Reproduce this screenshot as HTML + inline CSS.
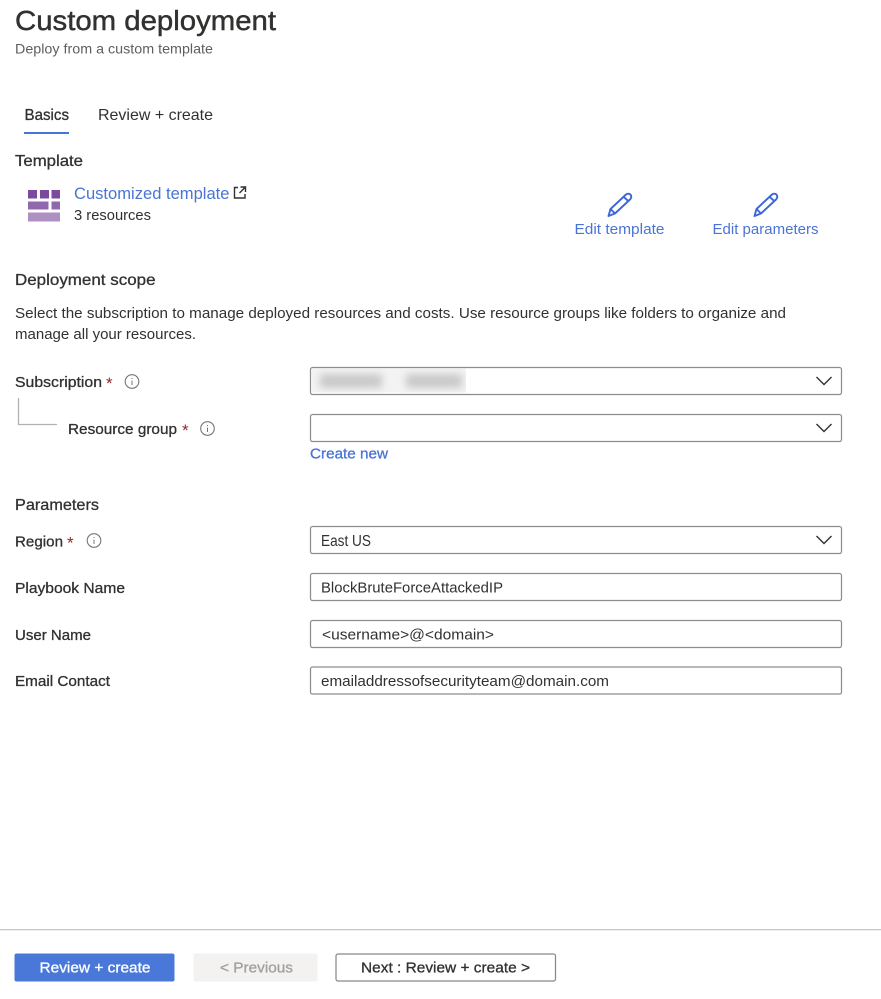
<!DOCTYPE html>
<html lang="en">
<head>
<meta charset="utf-8">
<title>Custom deployment</title>
<style>
html,body{margin:0;padding:0;background:#fff;width:881px;height:999px;overflow:hidden}
svg{display:block}
text{font-family:"Liberation Sans",sans-serif;fill:#323130;font-size:15px}
.sb{stroke:#323130;stroke-width:.3px}
.lnk{fill:#4a74d4}
.box{fill:#fff;stroke:#8f8d8b;stroke-width:1.25}
.chev{fill:none;stroke:#323130;stroke-width:1.4}
.info circle{fill:none;stroke:#797775;stroke-width:1.1}
.info rect{fill:#797775}
.pen{fill:none;stroke:#3d66d6;stroke-width:1.9;stroke-linejoin:round}
.star{fill:#8f2a30}
</style>
</head>
<body>
<svg width="881" height="999" viewBox="0 0 881 999" xmlns="http://www.w3.org/2000/svg">
<defs><filter id="b" x="-30%" y="-60%" width="160%" height="220%"><feGaussianBlur stdDeviation="4"/></filter>
<clipPath id="c"><rect x="312" y="368" width="154" height="25"/></clipPath></defs>

<text x="15" y="30" textLength="261" lengthAdjust="spacingAndGlyphs" style="font-size:28px;stroke:#323130;stroke-width:.45px">Custom deployment</text>
<text x="15" y="53.500" textLength="198" lengthAdjust="spacingAndGlyphs" style="font-size:14px;fill:#605e5c">Deploy from a custom template</text>

<text x="24.500" y="120" textLength="44.500" lengthAdjust="spacingAndGlyphs" class="sb" style="font-size:16px">Basics</text>
<text x="98" y="120" textLength="115" lengthAdjust="spacingAndGlyphs" style="font-size:16px">Review + create</text>
<rect x="24" y="132" width="45" height="2" fill="#4576d6"/>

<text x="15" y="166" textLength="68" lengthAdjust="spacingAndGlyphs" class="sb" style="font-size:16px">Template</text>

<g>
<rect x="28" y="190" width="9" height="8.500" fill="#7b4a9e"/>
<rect x="40" y="190" width="9" height="8.500" fill="#7b4a9e"/>
<rect x="51.500" y="190" width="8.500" height="8.500" fill="#7b4a9e"/>
<rect x="28" y="201.500" width="20.500" height="8" fill="#9068ae"/>
<rect x="51.500" y="201.500" width="8.500" height="8" fill="#9068ae"/>
<rect x="28" y="212.500" width="32" height="9" fill="#ae90c3"/>
</g>
<text x="74" y="199" textLength="155.500" lengthAdjust="spacingAndGlyphs" class="lnk" style="font-size:16.500px">Customized template</text>
<g fill="none" stroke="#323130" stroke-width="1.400">
<path d="M238 187.500H234.500V198H245V194"/>
<path d="M240.500 187H245.500V192M245.500 187L239.500 193"/>
</g>
<text x="74" y="220" textLength="77" lengthAdjust="spacingAndGlyphs" style="font-size:14.500px">3 resources</text>

<g class="pen">
<path d="M608.500 216L610.500 209L626 194.500C628 192.800 630.500 194 631 195.500C631.600 197 631.200 198.300 630 199.500L615 213.500Z"/>
<path d="M610.500 209L615 213.500M623.500 196.800L628.300 201"/>
</g>
<g class="pen">
<path d="M754.500 216L756.500 209L772 194.500C774 192.800 776.500 194 777 195.500C777.600 197 777.200 198.300 776 199.500L761 213.500Z"/>
<path d="M756.500 209L761 213.500M769.500 196.800L774.300 201"/>
</g>
<text x="574.500" y="234" textLength="90" lengthAdjust="spacingAndGlyphs" class="lnk" style="font-size:15px">Edit template</text>
<text x="712.500" y="234" textLength="106" lengthAdjust="spacingAndGlyphs" class="lnk" style="font-size:15px">Edit parameters</text>

<text x="15" y="285" textLength="140.500" lengthAdjust="spacingAndGlyphs" class="sb" style="font-size:16px">Deployment scope</text>
<text x="15" y="318" textLength="771" lengthAdjust="spacingAndGlyphs" style="font-size:15px">Select the subscription to manage deployed resources and costs. Use resource groups like folders to organize and</text>
<text x="15" y="339" textLength="181" lengthAdjust="spacingAndGlyphs" style="font-size:15px">manage all your resources.</text>

<text x="15" y="387" textLength="87" lengthAdjust="spacingAndGlyphs" class="sb">Subscription</text>
<text x="106" y="389" class="star" style="font-size:17px">*</text>
<g class="info"><circle cx="132" cy="381.500" r="6.800"/><rect x="131.500" y="380.500" width="1" height="4.500"/><rect x="131.500" y="378" width="1" height="1"/></g>

<path d="M18.500 398V424.500H57" fill="none" stroke="#b3b1af" stroke-width="1.300"/>

<text x="68" y="434" textLength="109" lengthAdjust="spacingAndGlyphs" class="sb">Resource group</text>
<text x="182" y="436" class="star" style="font-size:17px">*</text>
<g class="info"><circle cx="207.500" cy="428.500" r="6.800"/><rect x="207" y="427.500" width="1" height="4.500"/><rect x="207" y="425" width="1" height="1"/></g>

<rect class="box" x="310.500" y="367.500" width="531" height="27" rx="2"/>
<rect x="312" y="368.500" width="154" height="24" fill="#f3f3f3"/>
<g clip-path="url(#c)"><rect x="320" y="374" width="62" height="14" fill="#c9c9c9" filter="url(#b)"/><rect x="406" y="374" width="56" height="14" fill="#c9c9c9" filter="url(#b)"/></g>
<path class="chev" d="M816.500 377L824 384.500L831.500 377"/>

<rect class="box" x="310.500" y="414.500" width="531" height="27" rx="2"/>
<path class="chev" d="M816.500 424L824 431.500L831.500 424"/>
<text x="310" y="458.500" textLength="78" lengthAdjust="spacingAndGlyphs" class="lnk sb" style="font-size:15px;stroke:#4a74d4">Create new</text>

<text x="15" y="510" textLength="84" lengthAdjust="spacingAndGlyphs" class="sb" style="font-size:16px">Parameters</text>

<text x="15" y="546.500" textLength="48" lengthAdjust="spacingAndGlyphs" class="sb">Region</text>
<text x="67" y="548.500" class="star" style="font-size:17px">*</text>
<g class="info"><circle cx="94" cy="540.500" r="6.800"/><rect x="93.500" y="539.500" width="1" height="4.500"/><rect x="93.500" y="537" width="1" height="1"/></g>
<text x="15" y="593" textLength="110" lengthAdjust="spacingAndGlyphs" class="sb">Playbook Name</text>
<text x="15" y="640" textLength="76" lengthAdjust="spacingAndGlyphs" class="sb">User Name</text>
<text x="15" y="686" textLength="95" lengthAdjust="spacingAndGlyphs" class="sb">Email Contact</text>

<rect class="box" x="310.500" y="526.500" width="531" height="27" rx="2"/>
<path class="chev" d="M816.500 536L824 543.500L831.500 536"/>
<text x="321" y="546" textLength="50" lengthAdjust="spacingAndGlyphs" style="font-size:15.500px">East US</text>

<rect class="box" x="310.500" y="573.500" width="531" height="27" rx="2"/>
<text x="321" y="592.500" textLength="182" lengthAdjust="spacingAndGlyphs">BlockBruteForceAttackedIP</text>

<rect class="box" x="310.500" y="620.500" width="531" height="27" rx="2"/>
<text x="322" y="639.500" textLength="172" lengthAdjust="spacingAndGlyphs">&lt;username&gt;@&lt;domain&gt;</text>

<rect class="box" x="310.500" y="667" width="531" height="27" rx="2"/>
<text x="321" y="686" textLength="288" lengthAdjust="spacingAndGlyphs">emailaddressofsecurityteam@domain.com</text>

<rect x="0" y="929" width="881" height="1.300" fill="#c8c6c4"/>

<rect x="14.500" y="953.500" width="160" height="28" rx="2" fill="#4a78d8"/>
<text x="39.500" y="972.500" textLength="111" lengthAdjust="spacingAndGlyphs" class="sb" style="fill:#fff;stroke:#fff">Review + create</text>

<rect x="193.500" y="953.500" width="124" height="28" rx="2" fill="#f3f2f1"/>
<text x="220" y="972.500" textLength="73" lengthAdjust="spacingAndGlyphs" class="sb" style="fill:#a19f9d;stroke:#a19f9d">&lt; Previous</text>

<rect x="336" y="954" width="219.500" height="27" rx="2" fill="#fff" stroke="#8a8886" stroke-width="1.250"/>
<text x="361" y="972.500" textLength="169" lengthAdjust="spacingAndGlyphs" class="sb">Next : Review + create &gt;</text>
</svg>
</body>
</html>
